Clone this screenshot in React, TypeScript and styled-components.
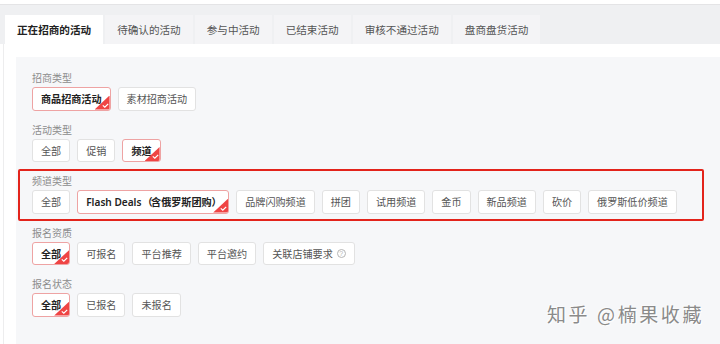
import React from "react";
import styled, { createGlobalStyle } from "styled-components";

const Global = createGlobalStyle`
  html, body { margin: 0; padding: 0; background: #ffffff; }
  body { font-family: "Noto Sans CJK SC", "Noto Sans", sans-serif; }
  * { box-sizing: border-box; }
`;

const Page = styled.div`
  width: 720px;
  height: 344px;
  position: relative;
  overflow: hidden;
  background: #ffffff;
`;

const TopStrip = styled.div`
  height: 5px;
  background: #ffffff;
  border-bottom: 1px solid #e4e4e6;
`;

const TabBar = styled.div`
  display: flex;
  align-items: flex-end;
  gap: 2px;
  height: 39px;
  padding-left: 5px;
  background: #eff0f2;
`;

const Tab = styled.div<{ $active?: boolean }>`
  height: 29px;
  display: flex;
  align-items: center;
  padding: 0 12px;
  font-size: 10.6px;
  color: ${(p) => (p.$active ? "#222" : "#555")};
  font-weight: ${(p) => (p.$active ? 700 : 400)};
  background: ${(p) => (p.$active ? "#ffffff" : "#f4f4f6")};
`;

const Body = styled.div`
  margin-left: 3px;
  padding: 13px 0 0 12px;
  border-left: 1px solid #ededee;
  height: 300px;
`;

const Panel = styled.div`
  background: #f6f7f9;
  height: 100%;
  padding: 9px 16px 0 2px;
  display: flex;
  flex-direction: column;
`;

const Group = styled.div<{ $highlight?: boolean }>`
  border: 2px solid ${(p) => (p.$highlight ? "#e3241b" : "transparent")};
  border-radius: 2px;
  padding: 3px 12px 4px;
  height: 51.5px;
`;

const Label = styled.div`
  font-size: 10px;
  line-height: 13px;
  color: #8c8c8c;
  margin-bottom: 3px;
`;

const Options = styled.div`
  display: flex;
  gap: 7px;
`;

const Option = styled.div<{ $selected?: boolean }>`
  position: relative;
  height: 23.5px;
  display: flex;
  align-items: center;
  padding: 0 8px;
  background: #ffffff;
  border: 1px solid ${(p) => (p.$selected ? "#eea3a3" : "#e2e2e2")};
  border-radius: 3px;
  font-size: 10.1px;
  color: ${(p) => (p.$selected ? "#222" : "#555")};
  font-weight: ${(p) => (p.$selected ? 700 : 400)};
  white-space: nowrap;
  overflow: hidden;
`;

const Latin = styled.span`
  font-family: "Noto Sans", "Noto Sans CJK SC", sans-serif;
  font-weight: 600;
  letter-spacing: 0;
  margin-right: 1px;
`;

const Paren = styled.span`
  font-weight: 700;
  letter-spacing: -1.5px;
`;

const Corner = styled.span`
  position: absolute;
  right: 0;
  bottom: 0;
  width: 15px;
  height: 14px;
  background: #ef4444;
  clip-path: polygon(100% 0, 100% 100%, 0 100%);
  display: flex;
  align-items: flex-end;
  justify-content: flex-end;
  padding: 0 1px 2px 0;
`;

const Help = styled.span`
  display: inline-flex;
  align-items: center;
  justify-content: center;
  width: 9px;
  height: 9px;
  margin-left: 4px;
  border: 1px solid #b5b5b5;
  border-radius: 50%;
  font-size: 7px;
  line-height: 1;
  color: #b5b5b5;
  font-family: "Liberation Sans", sans-serif;
`;

const Watermark = styled.div`
  position: absolute;
  left: 547px;
  top: 304px;
  font-size: 19px;
  line-height: 1;
  letter-spacing: 2.6px;
  color: #8a8a8a;
  text-shadow: 1px 1px 0 #ffffff, -1px -1px 0 rgba(255, 255, 255, 0.6);
  white-space: nowrap;
`;

const Check = () => (
  <svg width="7" height="5" viewBox="0 0 7 5">
    <path d="M0.8 2.4 L2.8 4.2 L6.2 0.8" fill="none" stroke="#fff" strokeWidth="1.2" />
  </svg>
);

type Opt = { text: React.ReactNode; selected?: boolean };

const groups: { label: string; highlight?: boolean; options: Opt[] }[] = [
  {
    label: "招商类型",
    options: [{ text: "商品招商活动", selected: true }, { text: "素材招商活动" }],
  },
  {
    label: "活动类型",
    options: [{ text: "全部" }, { text: "促销" }, { text: "频道", selected: true }],
  },
  {
    label: "频道类型",
    highlight: true,
    options: [
      { text: "全部" },
      {
        text: (
          <>
            <Latin>Flash Deals</Latin>
            <Paren>（</Paren>含俄罗斯团购<Paren>）</Paren>
          </>
        ),
        selected: true,
      },
      { text: "品牌闪购频道" },
      { text: "拼团" },
      { text: "试用频道" },
      { text: "金币" },
      { text: "新品频道" },
      { text: "砍价" },
      { text: "俄罗斯低价频道" },
    ],
  },
  {
    label: "报名资质",
    options: [
      { text: "全部", selected: true },
      { text: "可报名" },
      { text: "平台推荐" },
      { text: "平台邀约" },
      {
        text: (
          <>
            关联店铺要求<Help>?</Help>
          </>
        ),
      },
    ],
  },
  {
    label: "报名状态",
    options: [{ text: "全部", selected: true }, { text: "已报名" }, { text: "未报名" }],
  },
];

const tabs = ["正在招商的活动", "待确认的活动", "参与中活动", "已结束活动", "审核不通过活动", "盘商盘货活动"];

export default function App() {
  return (
    <Page>
      <Global />
      <TopStrip />
      <TabBar>
        {tabs.map((t, i) => (
          <Tab key={t} $active={i === 0}>
            {t}
          </Tab>
        ))}
      </TabBar>
      <Body>
        <Panel>
          {groups.map((g) => (
            <Group key={g.label} $highlight={g.highlight}>
              <Label>{g.label}</Label>
              <Options>
                {g.options.map((o, i) => (
                  <Option key={i} $selected={o.selected}>
                    {o.text}
                    {o.selected && (
                      <Corner>
                        <Check />
                      </Corner>
                    )}
                  </Option>
                ))}
              </Options>
            </Group>
          ))}
        </Panel>
      </Body>
      <Watermark>知乎 @楠果收藏</Watermark>
    </Page>
  );
}
